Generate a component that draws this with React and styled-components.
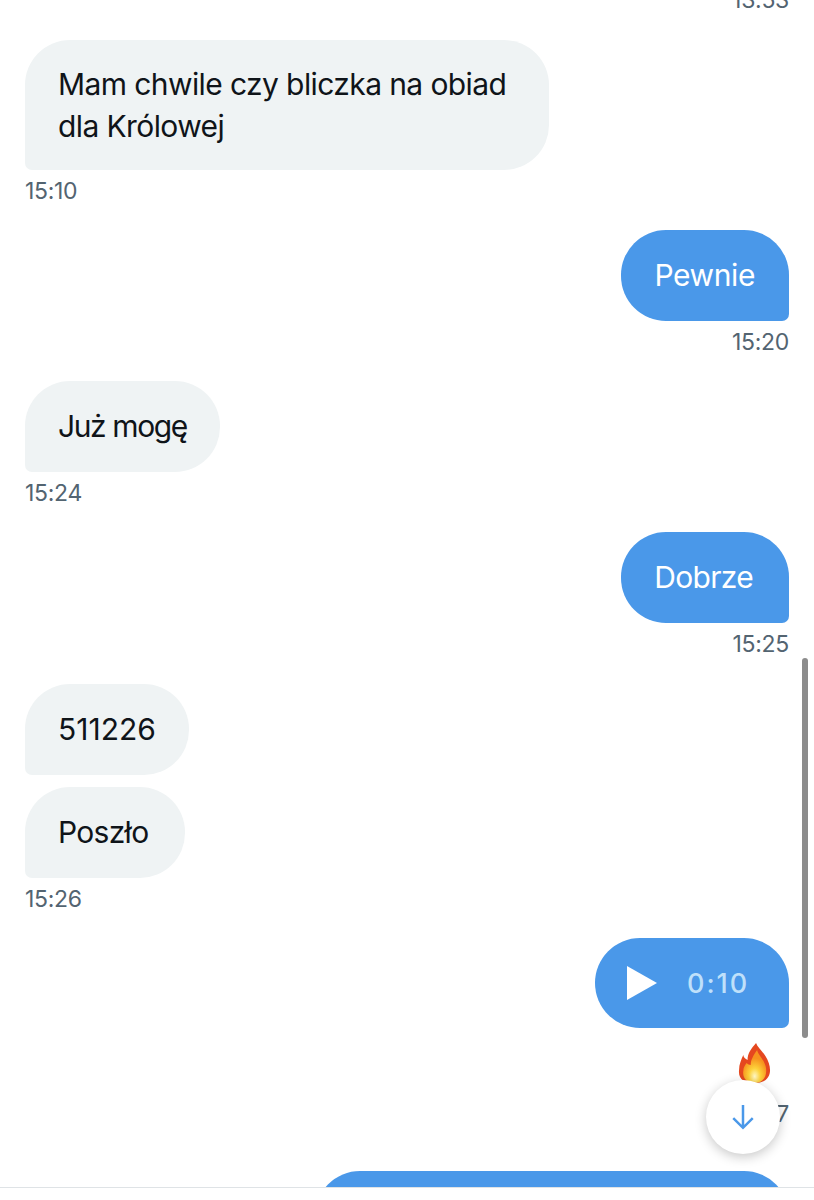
import styled, { createGlobalStyle } from 'styled-components';

const GlobalStyle = createGlobalStyle`
	html, body {
		margin: 0;
		padding: 0;
		background: #fff;
	}
`;

const Page = styled.div`
	position: relative;
	width: 814px;
	height: 1200px;
	overflow: hidden;
	background: #fff;
	font-family: Inter, "Liberation Sans", sans-serif;
`;

const Thread = styled.div`
	display: flex;
	flex-direction: column;
	margin-top: -20.8px;
	padding: 0 25px;
`;

const Group = styled.div`
	display: flex;
	flex-direction: column;
	align-items: ${(p) => (p.$mine ? 'flex-end' : 'flex-start')};
	margin-bottom: 23.3px;
`;

const Bubble = styled.div`
	box-sizing: border-box;
	display: flex;
	align-items: center;
	min-height: 91px;
	max-width: 524px;
	width: ${(p) => (p.$wide ? '524px' : 'auto')};
	padding: ${(p) => (p.$wide ? 23 : 26)}px ${(p) => p.$end ?? 33}px ${(p) => (p.$wide ? 23 : 26)}px 33px;
	border-radius: 45px;
	border-${(p) => (p.$mine ? 'bottom-right' : 'bottom-left')}-radius: 7px;
	margin-bottom: ${(p) => p.$gap ?? 0}px;
	background: ${(p) => (p.$mine ? '#4a98e9' : '#eff3f4')};
	color: ${(p) => (p.$mine ? '#fff' : '#0f1419')};
	font-size: 30px;
	line-height: ${(p) => (p.$wide ? 42 : 39)}px;
	letter-spacing: ${(p) => p.$track ?? -0.4}px;
`;

const AudioBubble = styled(Bubble)`
	gap: 30px;
	width: 194px;
	min-height: 90px;
	padding: 0 0 0 32px;
`;

const NextBubble = styled(Bubble)`
	width: 474px;
`;

const Duration = styled.span`
	color: #bfe0fa;
	font-size: 27px;
	font-weight: 500;
	letter-spacing: 2px;
`;

const Time = styled.div`
	margin-top: 5px;
	color: #536471;
	font-size: 23px;
	line-height: 32px;
	letter-spacing: -0.3px;
`;

const Reaction = styled.svg`
	display: block;
	margin: 15px 16px 0 0;
`;

const LastTime = styled(Time)`
	margin-top: 15px;
	margin-bottom: 41px;
`;

const ScrollThumb = styled.div`
	position: absolute;
	top: 658px;
	left: 802px;
	width: 6px;
	height: 380px;
	border-radius: 3px;
	background: #8c8c8c;
`;

const ScrollButton = styled.div`
	position: absolute;
	top: 1080px;
	left: 706px;
	display: flex;
	align-items: center;
	justify-content: center;
	width: 74px;
	height: 74px;
	border-radius: 50%;
	background: #fff;
	color: #4a98e9;
	box-shadow: 0 3px 12px rgba(0, 0, 0, 0.22);
`;

const BottomBar = styled.div`
	position: absolute;
	left: 0;
	right: 0;
	bottom: 0;
	height: 12px;
	border-top: 1px solid #dfe3e6;
	background: #fff;
`;

const Fire = () => (
	<Reaction width="35" height="40" viewBox="0 0 33 40" preserveAspectRatio="none">
		<defs>
			<radialGradient id="flameCore" cx="50%" cy="80%" r="55%">
				<stop offset="0%" stopColor="#fff8c8" />
				<stop offset="45%" stopColor="#fdd23a" />
				<stop offset="100%" stopColor="#f7931e" />
			</radialGradient>
		</defs>
		<path
			d="M17 0c2 6 9 10 12 20 3 9 1 20-13 20C6 40 0 36 1 27 1 21 3 17 5 12c0 2 2 4 4 5C9 10 13 5 17 0z"
			fill="#e5481f"
		/>
		<path
			d="M18 7c1 5 6 9 8 16 2 8-1 17-10 17C8 40 4 35 5 28c0-4 2-6 3-8 1 1 3 2 4 2 0-6 3-10 6-15z"
			fill="url(#flameCore)"
		/>
	</Reaction>
);

const App = () => (
	<Page>
		<GlobalStyle />
		<Thread>
			<Group $mine>
				<Time>13:53</Time>
			</Group>
			<Group>
				<Bubble $track={-0.6} $wide>Mam chwile czy bliczka na obiad dla Królowej</Bubble>
				<Time>15:10</Time>
			</Group>
			<Group $mine>
				<Bubble $mine $end={34}>Pewnie</Bubble>
				<Time>15:20</Time>
			</Group>
			<Group>
				<Bubble $track={-1.4}>Już mogę</Bubble>
				<Time>15:24</Time>
			</Group>
			<Group $mine>
				<Bubble $mine $track={-0.7} $end={36}>Dobrze</Bubble>
				<Time>15:25</Time>
			</Group>
			<Group>
				<Bubble $gap={12.3} $track={0}>511226</Bubble>
				<Bubble $track={-0.7} $end={37}>Poszło</Bubble>
				<Time>15:26</Time>
			</Group>
			<Group $mine>
				<AudioBubble $mine>
					<svg width="30" height="34" viewBox="0 0 30 34">
						<path d="M0 0l30 17L0 34z" fill="#fff" />
					</svg>
					<Duration>0:10</Duration>
				</AudioBubble>
				<Fire />
				<LastTime>15:27</LastTime>
				<NextBubble $mine />
			</Group>
		</Thread>
		<ScrollThumb />
		<ScrollButton>
			<svg width="26" height="26" viewBox="0 0 24 24" fill="none" stroke="currentColor" strokeWidth="2.3">
				<path d="M12 1v21M3 13l9 9 9-9" />
			</svg>
		</ScrollButton>
		<BottomBar />
	</Page>
);

export default App;
